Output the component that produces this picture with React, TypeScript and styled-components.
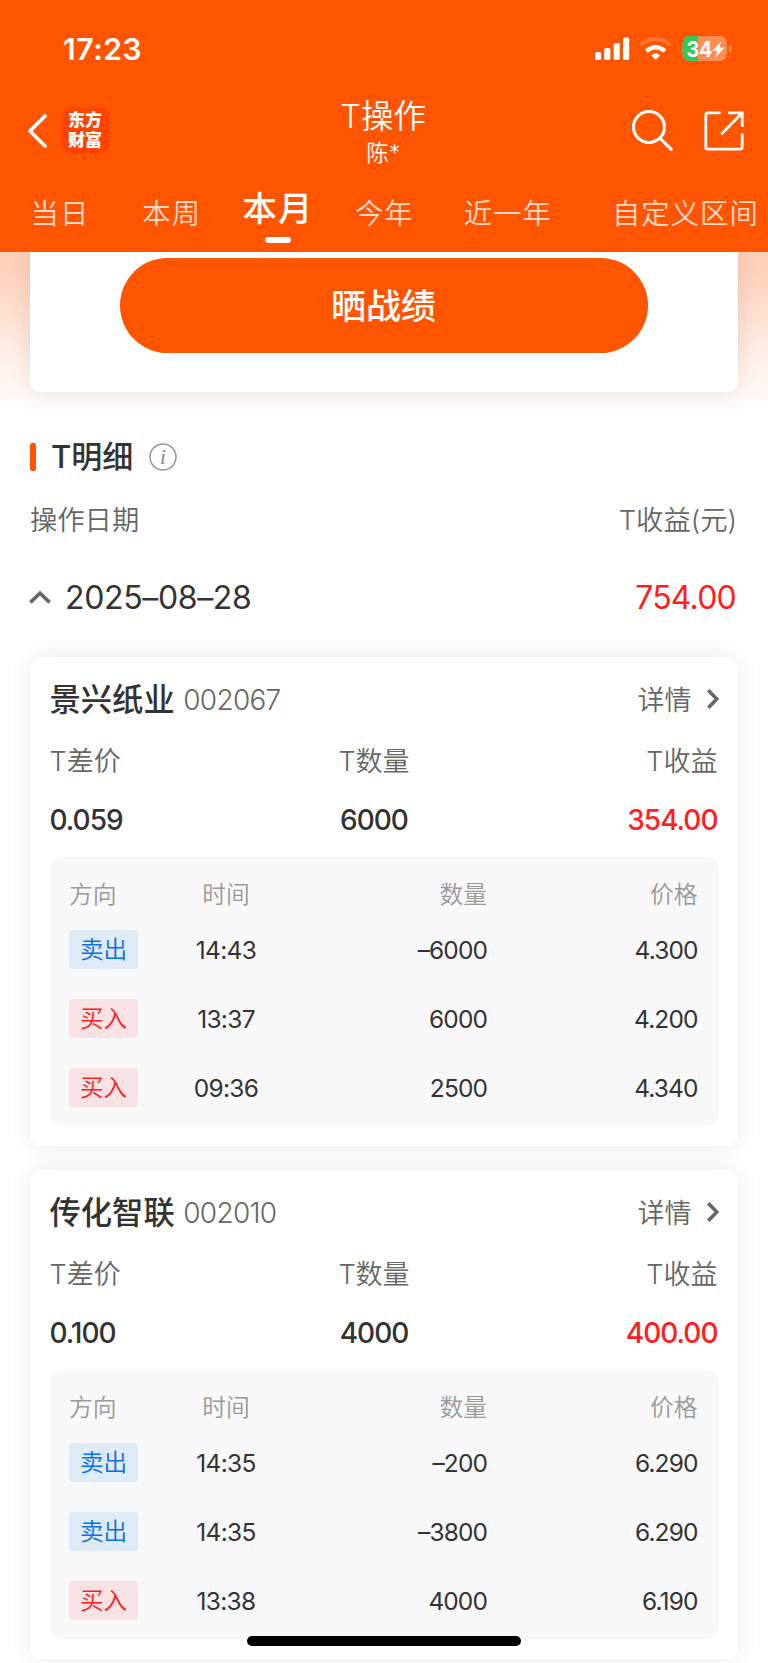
import React from 'react';
import styled, { createGlobalStyle, css } from 'styled-components';

const ORANGE = '#ff5500';
const RED = '#ff1d1d';

const GlobalStyle = createGlobalStyle`
  *, *::before, *::after { box-sizing: border-box; }
  html, body { margin: 0; padding: 0; background: #fff; }
  body {
    font-family: Inter, 'Noto Sans CJK SC', sans-serif;
    color: #333;
  }
`;

const Screen = styled.div`
  position: relative;
  width: 768px;
  height: 1663px;
  overflow: hidden;
  background: #fff;
  white-space: nowrap;
`;

const Header = styled.header`
  position: relative;
  z-index: 1;
  height: 252px;
  background: ${ORANGE};
  color: #fff;
`;

const StatusBar = styled.div`
  display: flex;
  align-items: center;
  justify-content: space-between;
  height: 98px;
  padding: 0 35px 0 63px;
`;

const Clock = styled.span`
  font-size: 30px;
  font-weight: 600;
  line-height: 36px;
  letter-spacing: 0.6px;
`;

const StatusIcons = styled.div`
  display: flex;
  align-items: center;
  height: 26px;
`;

const NavBar = styled.div`
  display: grid;
  grid-template-columns: 1fr auto 1fr;
  grid-template-rows: 65px;
  align-items: center;
  height: 66px;
  padding: 0 24px 0 26.5px;
`;

const NavLeft = styled.div`
  display: flex;
  align-items: center;
  gap: 14px;
`;

const NavRight = styled.div`
  display: flex;
  align-items: center;
  justify-content: flex-end;
  gap: 30px;
`;

const Logo = styled.div`
  display: flex;
  flex-direction: column;
  align-items: center;
  width: 47px;
  height: 47px;
  border-radius: 10px;
  background: #ff4300;
  padding-top: 4px;
  font-family: 'Liberation Sans', 'Noto Sans CJK SC', sans-serif;
  font-size: 17px;
  font-weight: 900;
  line-height: 20px;
`;

const NavTitle = styled.div`
  display: flex;
  flex-direction: column;
  align-items: center;
  align-self: start;
  margin-right: 4px;
`;

const TitleText = styled.div`
  font-size: 32.6px;
  font-weight: 350;
  line-height: 36px;
`;

const TitleSub = styled.div`
  margin-top: 4px;
  font-size: 22.6px;
  font-weight: 350;
  line-height: 30px;
`;

const Tabs = styled.nav`
  display: flex;
  height: 88px;
  padding-left: 30.5px;
`;

const Tab = styled.div<{ $gap?: number; $active?: boolean }>`
  display: flex;
  flex-direction: column;
  align-items: center;
  flex: none;
  margin-left: ${(p) => p.$gap ?? 0}px;
  padding-top: 28px;
  color: rgba(255, 255, 255, 0.78);
  font-size: 28.4px;
  font-weight: 350;
  letter-spacing: 1px;
  line-height: 44px;
  ${(p) =>
    p.$active &&
    css`
      padding-top: 23px;
      color: #fff;
      font-size: 34.4px;
      font-weight: 500;
      letter-spacing: 1px;
    `}
`;

const TabMark = styled.span`
  width: 26px;
  height: 6px;
  margin-top: 6px;
  border-radius: 3px;
  background: #fff;
`;

const Hero = styled.div`
  height: 164px;
  padding: 0 30px;
  background: linear-gradient(180deg, #ffcdb5 0%, #ffddcc 32%, #fff1ea 66%, #ffffff 100%);
`;

const HeroCard = styled.div`
  display: flex;
  justify-content: center;
  height: 140px;
  padding-top: 6px;
  border-radius: 0 0 12px 12px;
  background: #fff;
  box-shadow: 0 0 24px rgba(60, 30, 20, 0.11);
`;

const ShareButton = styled.button`
  width: 528px;
  height: 95px;
  padding: 0 1px 4px 0;
  border: 0;
  border-radius: 48px;
  background: ${ORANGE};
  color: #fff;
  font-family: inherit;
  font-size: 35px;
  font-weight: 500;
`;

const SectionTitle = styled.h2`
  display: flex;
  align-items: center;
  height: 40px;
  margin: 21px 30px 0;
  font-size: 31px;
  font-weight: 500;
  line-height: 40px;
`;

const Bar = styled.span`
  width: 6px;
  height: 28px;
  margin-right: 15px;
  border-radius: 2px;
  background: ${ORANGE};
`;

const InfoIcon = styled.svg`
  margin-left: 16px;
`;

const ListHead = styled.div`
  display: flex;
  justify-content: space-between;
  margin: 24px 31px 0 30px;
  color: #666;
  font-size: 27.3px;
  font-weight: 350;
  line-height: 40px;
`;

const DayRow = styled.div`
  display: flex;
  align-items: center;
  height: 40px;
  margin: 36px 32px 0 28.5px;
  font-size: 32px;
  font-weight: 400;
  line-height: 40px;
`;

const DayDate = styled.span`
  flex: 1;
  margin-left: 14.5px;
  padding-top: 1px;
  letter-spacing: -0.35px;
`;

const DayProfit = styled.span`
  padding-top: 1px;
  color: ${RED};
  letter-spacing: -0.8px;
`;

const Cards = styled.div`
  display: flex;
  flex-direction: column;
  gap: 24px;
  margin: 40px 30px 0;
`;

const Card = styled.section`
  height: 489px;
  padding: 22px 19.5px 0;
  border-radius: 12px;
  background: #fff;
  box-shadow: 0 0 24px rgba(0, 0, 0, 0.09);
`;

const CardHead = styled.div`
  display: flex;
  align-items: center;
  height: 40px;
`;

const StockName = styled.span`
  padding-top: 2px;
  font-size: 31.3px;
  font-weight: 500;
  line-height: 40px;
`;

const StockCode = styled.span`
  flex: 1;
  margin-left: 8.5px;
  padding-top: 1px;
  color: #666;
  font-size: 28px;
  font-weight: 350;
  letter-spacing: -0.7px;
`;

const Detail = styled.span`
  display: flex;
  align-items: center;
  gap: 14px;
  color: #666;
  font-size: 27px;
  font-weight: 350;
  line-height: 40px;
`;

const DetailText = styled.span`
  padding-top: 3px;
`;

const Metrics = styled.div`
  display: grid;
  grid-template-columns: 200px 250px 219px;
  margin-top: 20px;
  row-gap: 20px;
`;

type Align = 'left' | 'center' | 'right';

const MetricLabel = styled.span<{ $align: Align }>`
  height: 44px;
  padding: 1px 1px 0 0;
  color: #666;
  font-size: 27px;
  font-weight: 350;
  line-height: 44px;
  text-align: ${(p) => p.$align};
`;

const MetricValue = styled.span<{ $align: Align; $red?: boolean }>`
  padding-right: 1px;
  color: ${(p) => (p.$red ? RED : '#333')};
  font-size: 28px;
  font-weight: 500;
  line-height: 34px;
  letter-spacing: -1px;
  text-align: ${(p) => p.$align};
`;

const TradeTable = styled.div`
  height: 269px;
  margin-top: 20px;
  padding: 16px 19.5px 0;
  border-radius: 12px;
  background: #f8f8fb;
`;

const TradeRow = styled.div<{ $head?: boolean }>`
  display: grid;
  grid-template-columns: 69px 176px 174px 210.5px;
  align-items: center;
  height: ${(p) => (p.$head ? 42 : 69)}px;
  padding-bottom: ${(p) => (p.$head ? 4 : 0)}px;
  color: ${(p) => (p.$head ? '#999' : '#333')};
  font-size: ${(p) => (p.$head ? 23.8 : 24.5)}px;
  font-weight: ${(p) => (p.$head ? 350 : 400)};
  letter-spacing: ${(p) => (p.$head ? 0 : -0.9)}px;
`;

const Cell = styled.span<{ $align: Align }>`
  padding-right: ${(p) => (p.$align === 'right' ? 1 : 0)}px;
  text-align: ${(p) => p.$align};
`;

const TimeCell = styled(Cell)`
  letter-spacing: -0.7px;
`;

const SideTag = styled.span<{ $sell: boolean }>`
  width: 69px;
  height: 39px;
  border-radius: 4px;
  background: ${(p) => (p.$sell ? '#deeaf6' : '#f8e2e4')};
  color: ${(p) => (p.$sell ? '#0a6ee6' : RED)};
  font-size: 23.6px;
  font-weight: 350;
  letter-spacing: 0;
  line-height: 40px;
  text-align: center;
`;

const HomeIndicator = styled.div`
  position: absolute;
  left: 247px;
  bottom: 17px;
  width: 274px;
  height: 10px;
  border-radius: 5px;
  background: #000;
`;

interface Trade {
  side: '卖出' | '买入';
  time: string;
  qty: string;
  price: string;
}

interface Stock {
  name: string;
  code: string;
  spread: string;
  qty: string;
  profit: string;
  trades: Trade[];
}

const tabs = [
  { label: '当日', gap: 0 },
  { label: '本周', gap: 53 },
  { label: '本月', gap: 41.5 },
  { label: '今年', gap: 41.5 },
  { label: '近一年', gap: 50 },
  { label: '自定义区间', gap: 60 },
];

const stocks: Stock[] = [
  {
    name: '景兴纸业',
    code: '002067',
    spread: '0.059',
    qty: '6000',
    profit: '354.00',
    trades: [
      { side: '卖出', time: '14:43', qty: '–6000', price: '4.300' },
      { side: '买入', time: '13:37', qty: '6000', price: '4.200' },
      { side: '买入', time: '09:36', qty: '2500', price: '4.340' },
    ],
  },
  {
    name: '传化智联',
    code: '002010',
    spread: '0.100',
    qty: '4000',
    profit: '400.00',
    trades: [
      { side: '卖出', time: '14:35', qty: '–200', price: '6.290' },
      { side: '卖出', time: '14:35', qty: '–3800', price: '6.290' },
      { side: '买入', time: '13:38', qty: '4000', price: '6.190' },
    ],
  },
];

const StatusGlyphs = () => (
  <svg width="138" height="26" viewBox="595 36 138 26">
    <g fill="#fff">
      <rect x="595" y="52" width="6.2" height="8" rx="1.8" />
      <rect x="604.2" y="48" width="6.2" height="12" rx="1.8" />
      <rect x="613.6" y="43" width="6.2" height="17" rx="1.8" />
      <rect x="623" y="37.6" width="6.2" height="22.4" rx="1.8" />
      <path d="M655.7 59.6 L651.6 55.4 Q655.7 52.2 659.8 55.4 Z" strokeLinejoin="round" stroke="#fff" strokeWidth="0.8" />
    </g>
    <path d="M646.4 51.2 Q655.7 43.2 665 51.2" fill="none" stroke="#fff" strokeWidth="4.4" />
    <path d="M641 44.8 Q655.7 32.8 670.4 44.8" fill="none" stroke="#fff" strokeOpacity="0.2" strokeWidth="4.2" />
    <clipPath id="battery">
      <rect x="682.5" y="36" width="44.5" height="25" rx="7" />
    </clipPath>
    <g clipPath="url(#battery)">
      <rect x="682" y="36" width="46" height="25" fill="#ff8d56" />
      <rect x="682" y="36" width="16" height="25" fill="#34c759" />
    </g>
    <path d="M729 45 Q732 46 732 48.7 Q732 51.4 729 52.4 Z" fill="#ff8d56" />
    <text x="686.4" y="56.8" fill="#fff" fontSize="22" fontWeight="700" textLength="26" lengthAdjust="spacingAndGlyphs" fontFamily="Inter, sans-serif">
      34
    </text>
    <path d="M721.4 41.2 L712.3 50.8 H717.3 L715.4 57.8 L724.6 47.6 H719.4 Z" fill="#fff" />
  </svg>
);

const BackIcon = () => (
  <svg width="21" height="36" viewBox="0 0 21 36" fill="none" stroke="#fff" strokeWidth="3.8" strokeLinecap="round" strokeLinejoin="round">
    <path d="M18 3 L3 18 L18 33" />
  </svg>
);

const SearchIcon = () => (
  <svg width="42" height="42" viewBox="0 0 42 42" fill="none" stroke="#fff" strokeWidth="3.1" strokeLinecap="round">
    <circle cx="17" cy="17" r="15.5" />
    <path d="M28.3 28.5 L39.3 39.3" />
  </svg>
);

const OpenIcon = () => (
  <svg width="40" height="40" viewBox="0 0 40 40" fill="none" stroke="#fff" strokeWidth="2.8">
    <path d="M16.5 1.8 H4 Q1.8 1.8 1.8 4 V36 Q1.8 38.2 4 38.2 H36 Q38.2 38.2 38.2 36 V22.5" />
    <path d="M24 1.8 H38.2 V16" />
    <path d="M38 2 L18 22.5" strokeLinecap="round" />
  </svg>
);

const ChevronUp = () => (
  <svg width="22" height="14" viewBox="0 0 22 14" fill="none" stroke="#666" strokeWidth="3.6">
    <path d="M1.4 12.4 L11 3.2 L20.6 12.4" />
  </svg>
);

const ChevronRight = () => (
  <svg width="13" height="20" viewBox="0 0 13 20" fill="none" stroke="#666" strokeWidth="3.6">
    <path d="M2.3 1.3 L10.8 10 L2.3 18.7" />
  </svg>
);

const StockCard = ({ stock }: { stock: Stock }) => (
  <Card>
    <CardHead>
      <StockName>{stock.name}</StockName>
      <StockCode>{stock.code}</StockCode>
      <Detail>
        <DetailText>详情</DetailText>
        <ChevronRight />
      </Detail>
    </CardHead>
    <Metrics>
      <MetricLabel $align="left">T差价</MetricLabel>
      <MetricLabel $align="center">T数量</MetricLabel>
      <MetricLabel $align="right">T收益</MetricLabel>
      <MetricValue $align="left">{stock.spread}</MetricValue>
      <MetricValue $align="center">{stock.qty}</MetricValue>
      <MetricValue $align="right" $red>
        {stock.profit}
      </MetricValue>
    </Metrics>
    <TradeTable>
      <TradeRow $head>
        <Cell $align="left">方向</Cell>
        <Cell $align="center">时间</Cell>
        <Cell $align="right">数量</Cell>
        <Cell $align="right">价格</Cell>
      </TradeRow>
      {stock.trades.map((t, i) => (
        <TradeRow key={i}>
          <SideTag $sell={t.side === '卖出'}>{t.side}</SideTag>
          <TimeCell $align="center">{t.time}</TimeCell>
          <Cell $align="right">{t.qty}</Cell>
          <Cell $align="right">{t.price}</Cell>
        </TradeRow>
      ))}
    </TradeTable>
  </Card>
);

export default function App() {
  const activeTab = '本月';
  return (
    <Screen>
      <GlobalStyle />
      <Header>
        <StatusBar>
          <Clock>17:23</Clock>
          <StatusIcons>
            <StatusGlyphs />
          </StatusIcons>
        </StatusBar>
        <NavBar>
          <NavLeft>
            <BackIcon />
            <Logo>
              <span>东方</span>
              <span>财富</span>
            </Logo>
          </NavLeft>
          <NavTitle>
            <TitleText>T操作</TitleText>
            <TitleSub>陈*</TitleSub>
          </NavTitle>
          <NavRight>
            <SearchIcon />
            <OpenIcon />
          </NavRight>
        </NavBar>
        <Tabs>
          {tabs.map((t) => (
            <Tab key={t.label} $gap={t.gap} $active={t.label === activeTab}>
              {t.label}
              {t.label === activeTab && <TabMark />}
            </Tab>
          ))}
        </Tabs>
      </Header>
      <Hero>
        <HeroCard>
          <ShareButton>晒战绩</ShareButton>
        </HeroCard>
      </Hero>
      <SectionTitle>
        <Bar />
        T明细
        <InfoIcon width="28" height="28" viewBox="0 0 28 28">
          <circle cx="14" cy="14" r="13" fill="none" stroke="#999" strokeWidth="1.6" />
          <text x="14" y="20.5" textAnchor="middle" fontFamily="Liberation Serif, serif" fontStyle="italic" fontSize="21" fontWeight="400" fill="#888">
            i
          </text>
        </InfoIcon>
      </SectionTitle>
      <ListHead>
        <span>操作日期</span>
        <span>T收益(元)</span>
      </ListHead>
      <DayRow>
        <ChevronUp />
        <DayDate>2025–08–28</DayDate>
        <DayProfit>754.00</DayProfit>
      </DayRow>
      <Cards>
        {stocks.map((s) => (
          <StockCard key={s.code} stock={s} />
        ))}
      </Cards>
      <HomeIndicator />
    </Screen>
  );
}
